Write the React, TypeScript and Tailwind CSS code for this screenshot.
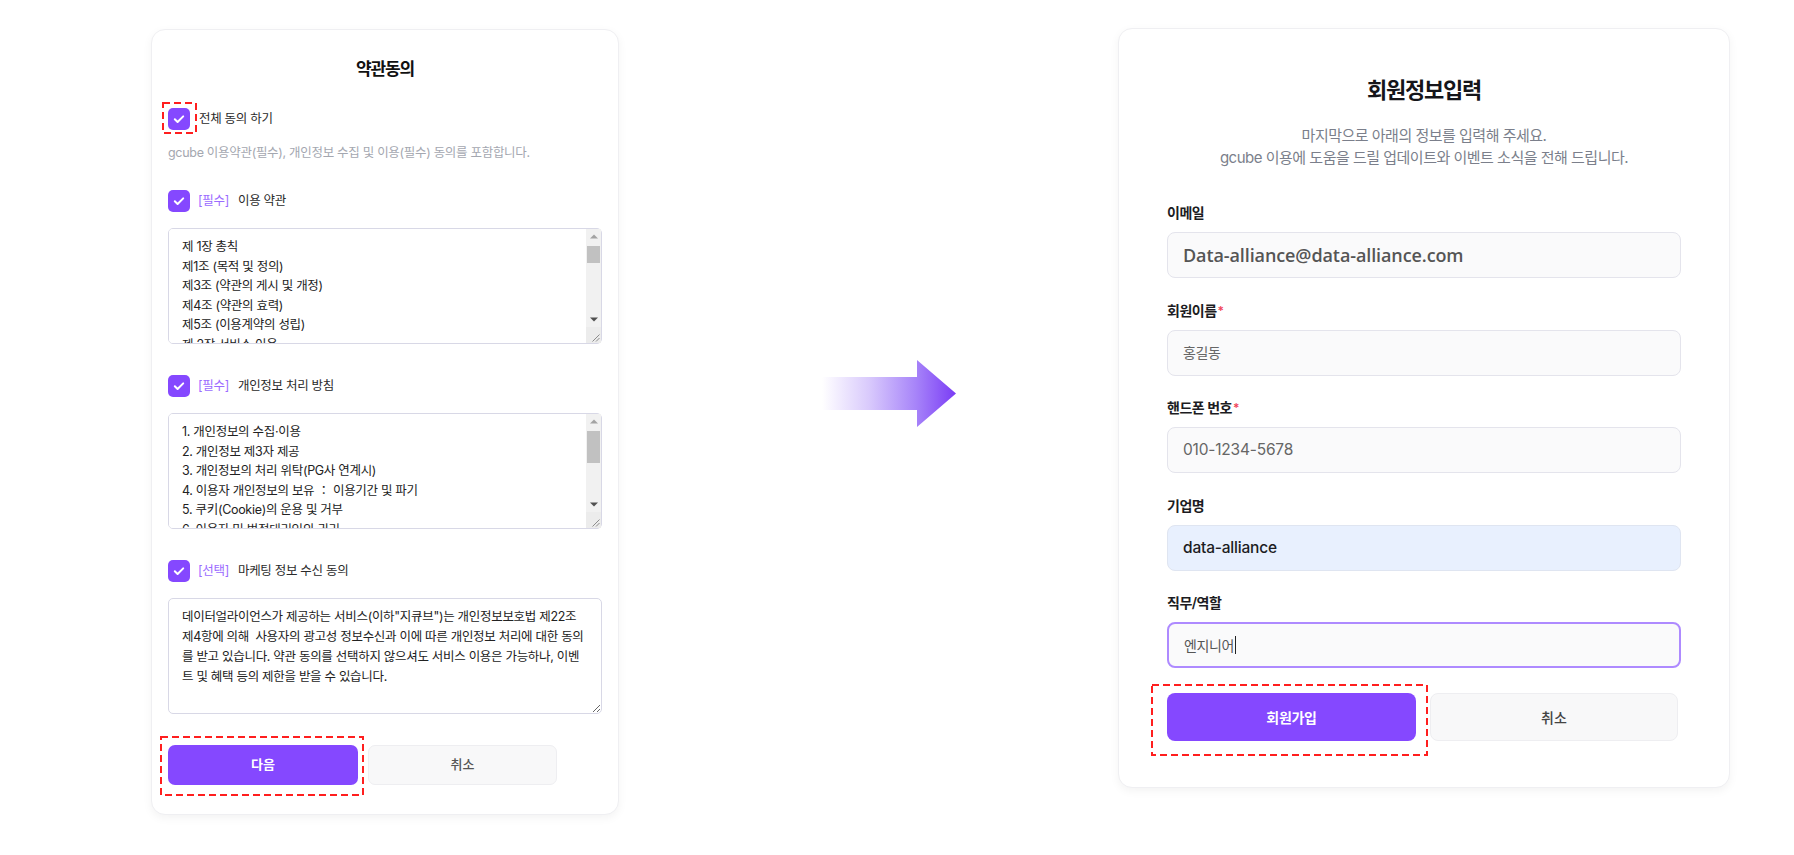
import React from "react";

const terms1 = [
  "제 1장 총칙",
  "제1조 (목적 및 정의)",
  "제3조 (약관의 게시 및 개정)",
  "제4조 (약관의 효력)",
  "제5조 (이용계약의 성립)",
  "제 2장 서비스 이용",
  "제6조 (서비스의 제공)",
  "제7조 (서비스의 변경 및 중지)",
  "제8조 (서비스 이용시간)",
  "제9조 (회원의 의무)",
  "제10조 (회사의 의무)",
  "제11조 (개인정보의 보호)",
  "제 3장 요금 및 결제",
  "제12조 (이용요금)",
  "제13조 (결제 방법)",
  "제14조 (환불 규정)",
  "제15조 (과오금)",
  "제 4장 계약 해지",
  "제16조 (계약 해지)",
  "제17조 (이용 제한)",
  "제 5장 기타",
  "제18조 (손해배상)",
  "제19조 (면책조항)",
  "제20조 (분쟁의 해결)",
  "제21조 (관할법원)",
  "부칙",
  "제1조 (시행일)",
  "이 약관은 2023년 1월 1일부터 시행합니다.",
].join("\n");

const terms2 = [
  "1. 개인정보의 수집·이용",
  "2. 개인정보 제3자 제공",
  "3. 개인정보의 처리 위탁(PG사 연계시)",
  "4. 이용자 개인정보의 보유 ： 이용기간 및 파기",
  "5. 쿠키(Cookie)의 운용 및 거부",
  "6. 이용자 및 법정대리인의 권리",
  "7. 개인정보의 안전성 확보 조치",
  "8. 개인정보 보호책임자",
  "9. 권익침해 구제방법",
  "10. 개인정보 처리방침의 변경",
  "11. 부칙",
  "본 방침은 2023년 1월 1일부터 시행됩니다.",
  "",
].join("\n");

const terms3 = [
  "데이터얼라이언스가 제공하는 서비스(이하\"지큐브\")는 개인정보보호법 제22조",
  "제4항에 의해  사용자의 광고성 정보수신과 이에 따른 개인정보 처리에 대한 동의",
  "를 받고 있습니다. 약관 동의를 선택하지 않으셔도 서비스 이용은 가능하나, 이벤",
  "트 및 혜택 등의 제한을 받을 수 있습니다.",
].join("\n");

function Check() {
  return (
    <div className="flex h-[22px] w-[22px] shrink-0 items-center justify-center rounded-[5px] bg-[#8548ff]">
      <svg width="22" height="22" viewBox="0 0 22 22" fill="none">
        <polyline
          points="6.8,11.2 9.6,14 15.2,8.4"
          stroke="#ffffff"
          strokeWidth="2"
          strokeLinecap="round"
          strokeLinejoin="round"
        />
      </svg>
    </div>
  );
}

function Dashed({ w, h, className }: { w: number; h: number; className: string }) {
  return (
    <svg
      className={"pointer-events-none absolute " + className}
      width={w}
      height={h}
      viewBox={`0 0 ${w} ${h}`}
      fill="none"
    >
      <rect
        x="1"
        y="1"
        width={w - 2}
        height={h - 2}
        stroke="#ff1f1f"
        strokeWidth="2"
        strokeDasharray="7 4"
      />
    </svg>
  );
}

const bodyText = "text-[12.5px] tracking-[-0.3px]";

function AgreeRow({ tag, label }: { tag: string; label: string }) {
  return (
    <div className="flex h-[22px] items-center">
      <Check />
      <span className={"ml-[8px] text-[#9b6bff] " + bodyText}>[{tag}]</span>
      <span className={"ml-[9px] text-[#2a2a2a] " + bodyText}>{label}</span>
    </div>
  );
}

const taClass =
  "block h-[116px] w-[434px] rounded-[5px] border border-[#d8d8e6] bg-white pl-[13px] pt-[8px] text-[12.5px] leading-[19.5px] tracking-[-0.3px] text-[#222] outline-none";

function ScrollTextarea({ value, thumb }: { value: string; thumb: number }) {
  return (
    <div className="relative mt-[16px]">
      <textarea
        className={taClass + " resize-none overflow-y-scroll pr-[22px] [scrollbar-width:none]"}
        readOnly
        defaultValue={value}
      />
      <div className="pointer-events-none absolute bottom-[1px] right-[1px] top-[1px] flex w-[15px] flex-col bg-[#f1f1f1]">
        <div className="flex h-[15px] items-center justify-center">
          <svg width="8" height="5" viewBox="0 0 8 5">
            <path d="M0 4.5 L4 0.5 L8 4.5 Z" fill="#a3a3a3" />
          </svg>
        </div>
        <div className="flex-1 px-[1px] pt-[2px]">
          <div className={"bg-[#c1c1c1] " + (thumb === 17 ? "h-[17px]" : "h-[32px]")} />
        </div>
        <div className="flex h-[15px] items-center justify-center">
          <svg width="8" height="5" viewBox="0 0 8 5">
            <path d="M0 0.5 L8 0.5 L4 4.5 Z" fill="#505050" />
          </svg>
        </div>
        <div className="h-[16px] bg-[#ececec]">
          <svg width="15" height="16" viewBox="0 0 15 16" fill="none">
            <path d="M13.5 7.5 L6.5 14.5 M13.5 11 L10 14.5" stroke="#8c8c8c" strokeWidth="1" />
          </svg>
        </div>
      </div>
    </div>
  );
}

function Field({
  label,
  required,
  children,
}: {
  label: string;
  required?: boolean;
  children: React.ReactNode;
}) {
  return (
    <div>
      <div className="mb-[9px] flex h-[20px] items-center text-[14px] font-semibold leading-[20px] tracking-[-0.5px] text-[#1c1c22]">
        {label}
        {required && <span className="ml-[1px] text-[12px] text-[#f0455a]">*</span>}
      </div>
      {children}
    </div>
  );
}

const inputBase =
  "flex h-[46px] w-[514px] items-center rounded-[8px] border px-[15px]";

export default function App() {
  return (
    <div className="min-h-screen bg-white font-[family-name:Inter,'Noto_Sans_CJK_KR',sans-serif]">
      <div className="flex items-start pl-[151px] pt-[29px]">
        {/* Left card */}
        <div className="w-[468px] rounded-[14px] border border-[#efeff2] bg-white px-[16px] pb-[29px] pt-[26px] shadow-[0_3px_10px_rgba(0,0,0,0.05)]">
          <h2 className="text-center text-[17px] font-bold leading-[26px] tracking-[-1.2px] text-[#111]">
            약관동의
          </h2>

          <div className="relative mt-[26px] flex h-[22px] items-center">
            <Check />
            <Dashed w={35} h={32} className="left-[-6px] top-[-6px]" />
            <span className={"ml-[9px] text-[#2a2a2a] " + bodyText}>전체 동의 하기</span>
          </div>
          <p className={"mt-[14px] leading-[18px] text-[#a4a7b0] " + bodyText}>
            gcube 이용약관(필수), 개인정보 수집 및 이용(필수) 동의를 포함합니다.
          </p>

          <div className="mt-[28px]">
            <AgreeRow tag="필수" label="이용 약관" />
          </div>
          <ScrollTextarea value={terms1} thumb={17} />

          <div className="mt-[31px]">
            <AgreeRow tag="필수" label="개인정보 처리 방침" />
          </div>
          <ScrollTextarea value={terms2} thumb={32} />

          <div className="mt-[31px]">
            <AgreeRow tag="선택" label="마케팅 정보 수신 동의" />
          </div>
          <textarea
            className={taClass + " mt-[16px] overflow-hidden pr-[6px] leading-[20px]"}
            readOnly
            wrap="off"
            defaultValue={terms3}
          />

          <div className="mt-[31px] flex gap-[10px]">
            <div className="relative">
              <button className="flex h-[40px] w-[190px] items-center justify-center rounded-[7px] bg-[#8548ff] text-[13px] font-bold text-white">
                다음
              </button>
              <Dashed w={204} h={60} className="left-[-8px] top-[-9px]" />
            </div>
            <button className="flex h-[40px] w-[189px] items-center justify-center rounded-[7px] border border-[#eeeef1] bg-[#f8f8f9] text-[13px] font-medium text-[#555]">
              취소
            </button>
          </div>
        </div>

        {/* Arrow */}
        <div className="ml-[203px] mt-[331px] h-[67px] w-[134px]">
          <svg width="134" height="67" viewBox="0 0 134 67">
            <defs>
              <linearGradient id="arrowGrad" x1="0" y1="0" x2="134" y2="0" gradientUnits="userSpaceOnUse">
                <stop offset="0" stopColor="#ffffff" />
                <stop offset="0.35" stopColor="#d9cafc" />
                <stop offset="0.7" stopColor="#a784f9" />
                <stop offset="1" stopColor="#7a3cf5" />
              </linearGradient>
            </defs>
            <path d="M0 17 H95 V0 L134 33.5 L95 67 V50 H0 Z" fill="url(#arrowGrad)" />
          </svg>
        </div>

        {/* Right card */}
        <div className="ml-[162px] mt-[-1px] w-[612px] rounded-[14px] border border-[#efeff2] bg-white px-[48px] pb-[46px] pt-[46px] shadow-[0_3px_10px_rgba(0,0,0,0.05)]">
          <h2 className="text-center text-[22px] font-bold leading-[30px] tracking-[-1.2px] text-[#15151a]">
            회원정보입력
          </h2>
          <div className="mt-[20px] text-center text-[15px] leading-[22px] tracking-[-0.5px] text-[#7b7f8b]">
            <p>마지막으로 아래의 정보를 입력해 주세요.</p>
            <p>gcube 이용에 도움을 드릴 업데이트와 이벤트 소식을 전해 드립니다.</p>
          </div>

          <div className="mt-[34px] flex flex-col gap-[22.5px]">
            <Field label="이메일">
              <div className={inputBase + " border-[#e4e4ec] bg-[#fafafb]"}>
                <span className="font-['Open_Sans',sans-serif] text-[18px] font-semibold tracking-[-0.1px] text-[#555]">
                  Data-alliance@data-alliance.com
                </span>
              </div>
            </Field>
            <Field label="회원이름" required>
              <div className={inputBase + " border-[#e4e4ec] bg-[#fafafb]"}>
                <span className="text-[14px] tracking-[-0.4px] text-[#666]">홍길동</span>
              </div>
            </Field>
            <Field label="핸드폰 번호" required>
              <div className={inputBase + " border-[#e4e4ec] bg-[#fafafb]"}>
                <span className="text-[15.5px] tracking-[-0.2px] text-[#666]">010-1234-5678</span>
              </div>
            </Field>
            <Field label="기업명">
              <div className={inputBase + " border-[#dfe5f1] bg-[#e8f0fe]"}>
                <span className="text-[15.5px] font-medium tracking-[-0.2px] text-[#1c1c22]">data-alliance</span>
              </div>
            </Field>
            <Field label="직무/역할">
              <div className={inputBase + " border-2 border-[#ae8aff] bg-[#fafafb] px-[14px]"}>
                <span className="text-[14px] tracking-[-0.4px] text-[#555]">엔지니어</span>
                <span className="ml-[1px] h-[18px] w-[1px] bg-[#222]" />
              </div>
            </Field>
          </div>

          <div className="mt-[25px] flex gap-[14px]">
            <div className="relative">
              <button className="flex h-[48px] w-[249px] items-center justify-center rounded-[8px] bg-[#8548ff] text-[14px] font-bold tracking-[-0.3px] text-white">
                회원가입
              </button>
              <Dashed w={277} h={72} className="left-[-16px] top-[-9px]" />
            </div>
            <button className="flex h-[48px] w-[248px] items-center justify-center rounded-[8px] border border-[#eeeef1] bg-[#f8f8f9] text-[14px] font-medium text-[#444]">
              취소
            </button>
          </div>
        </div>
      </div>
    </div>
  );
}
